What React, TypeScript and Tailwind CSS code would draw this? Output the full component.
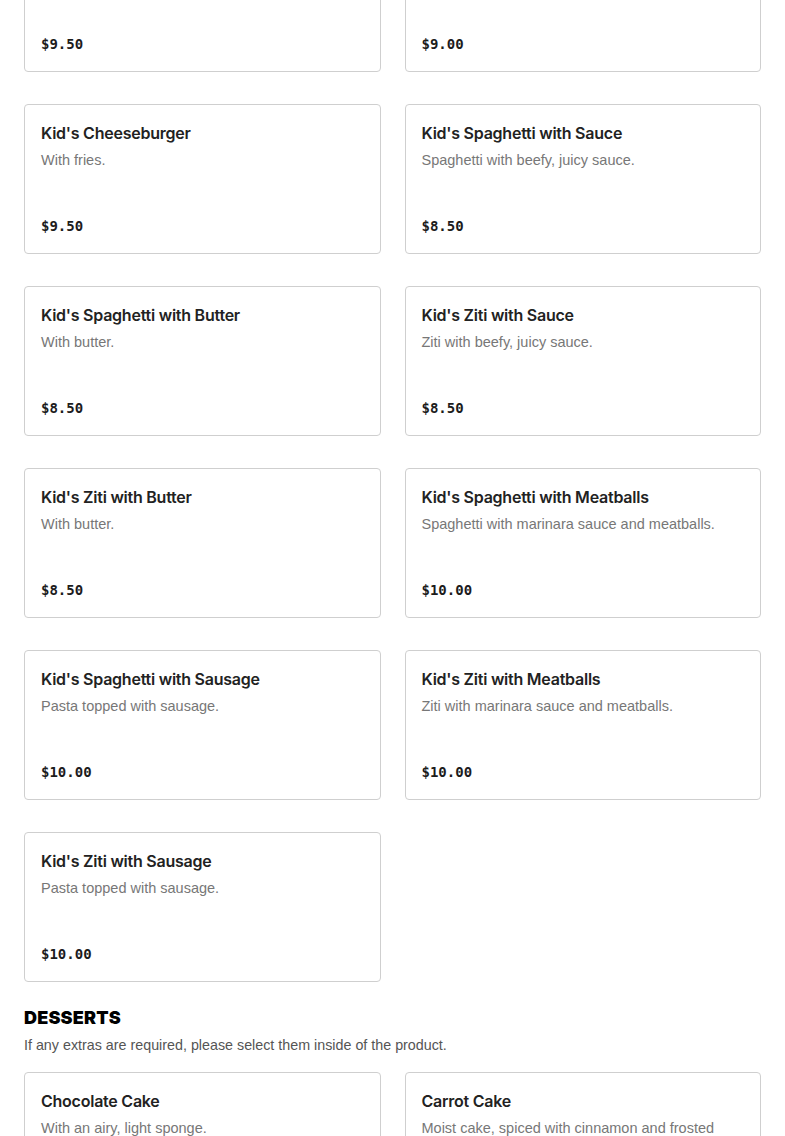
import React from "react";

type Item = { title: string; desc: string; price: string };

const kids: Item[] = [
  { title: "Kid's Chicken Fingers", desc: "With fries.", price: "$9.50" },
  { title: "Kid's Grilled Cheese", desc: "With fries.", price: "$9.00" },
  { title: "Kid's Cheeseburger", desc: "With fries.", price: "$9.50" },
  { title: "Kid's Spaghetti with Sauce", desc: "Spaghetti with beefy, juicy sauce.", price: "$8.50" },
  { title: "Kid's Spaghetti with Butter", desc: "With butter.", price: "$8.50" },
  { title: "Kid's Ziti with Sauce", desc: "Ziti with beefy, juicy sauce.", price: "$8.50" },
  { title: "Kid's Ziti with Butter", desc: "With butter.", price: "$8.50" },
  { title: "Kid's Spaghetti with Meatballs", desc: "Spaghetti with marinara sauce and meatballs.", price: "$10.00" },
  { title: "Kid's Spaghetti with Sausage", desc: "Pasta topped with sausage.", price: "$10.00" },
  { title: "Kid's Ziti with Meatballs", desc: "Ziti with marinara sauce and meatballs.", price: "$10.00" },
  { title: "Kid's Ziti with Sausage", desc: "Pasta topped with sausage.", price: "$10.00" },
];

const desserts: Item[] = [
  { title: "Chocolate Cake", desc: "With an airy, light sponge.", price: "$7.00" },
  { title: "Carrot Cake", desc: "Moist cake, spiced with cinnamon and frosted with cream cheese.", price: "$7.00" },
];

function Card({ item }: { item: Item }) {
  return (
    <div className="flex h-[150px] flex-col justify-between rounded-[4px] border border-[#cfcfcf] bg-white px-4 pb-4 pt-4">
      <div>
        <div className="text-[16px] font-semibold leading-6 tracking-[-0.015em] text-[#222]" style={{ fontFamily: "Inter, 'Liberation Sans', sans-serif" }}>
          {item.title}
        </div>
        <div className="mt-[3px] max-w-[316px] text-[14.5px] leading-6 text-[#777]" style={{ fontFamily: "'Liberation Sans', Arial, sans-serif" }}>
          {item.desc}
        </div>
      </div>
      <div className="text-[14px] font-bold leading-[22px] text-[#1c1c1c]" style={{ fontFamily: "'DejaVu Sans Mono', monospace" }}>
        {item.price}
      </div>
    </div>
  );
}

export default function App() {
  return (
    <div className="h-[1136px] overflow-hidden bg-white px-6">
      <div className="mt-[-78px] grid grid-cols-2 gap-x-6 gap-y-8">
        {kids.map((k, i) => (
          <Card key={i} item={k} />
        ))}
      </div>
      <div className="mt-6">
        <h2 className="text-[18px] font-black uppercase leading-6 tracking-[0.01em] text-black" style={{ fontFamily: "Inter, 'Liberation Sans', sans-serif" }}>
          Desserts
        </h2>
        <p className="mt-[3px] text-[14.3px] leading-6 text-[#555]" style={{ fontFamily: "'Liberation Sans', Arial, sans-serif" }}>
          If any extras are required, please select them inside of the product.
        </p>
      </div>
      <div className="mt-[15px] grid grid-cols-2 gap-x-6 gap-y-8">
        {desserts.map((k, i) => (
          <Card key={i} item={k} />
        ))}
      </div>
    </div>
  );
}
